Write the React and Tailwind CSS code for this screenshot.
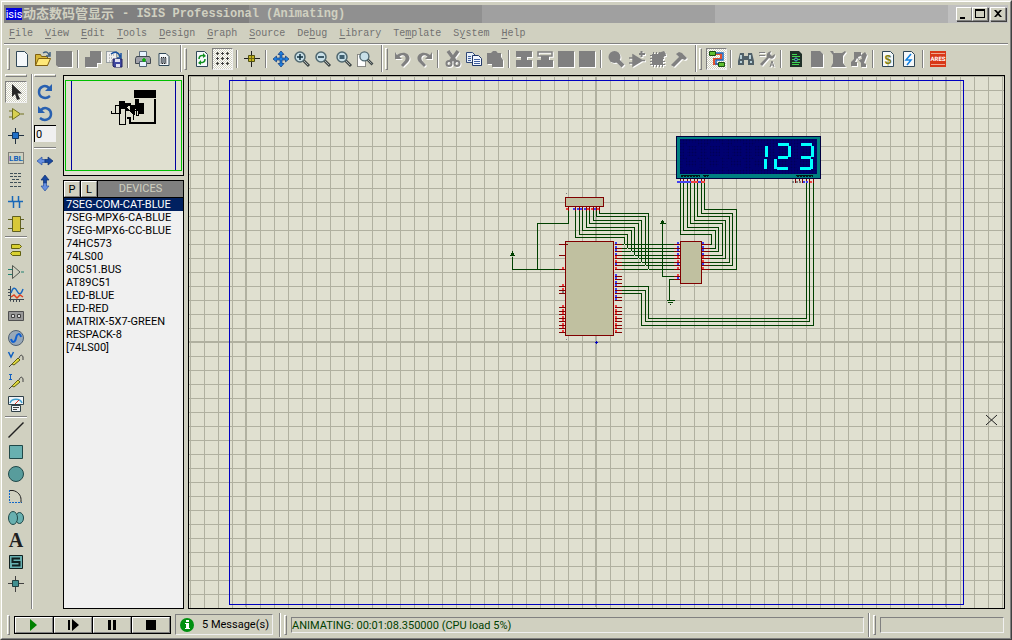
import { useState } from 'react';

const menus = [
  ['', 'F', 'ile'],
  ['', 'V', 'iew'],
  ['', 'E', 'dit'],
  ['', 'T', 'ools'],
  ['', 'D', 'esign'],
  ['', 'G', 'raph'],
  ['', 'S', 'ource'],
  ['De', 'b', 'ug'],
  ['', 'L', 'ibrary'],
  ['Te', 'm', 'plate'],
  ['S', 'y', 'stem'],
  ['', 'H', 'elp'],
];

const devices = [
  '7SEG-COM-CAT-BLUE',
  '7SEG-MPX6-CA-BLUE',
  '7SEG-MPX6-CC-BLUE',
  '74HC573',
  '74LS00',
  '80C51.BUS',
  'AT89C51',
  'LED-BLUE',
  'LED-RED',
  'MATRIX-5X7-GREEN',
  'RESPACK-8',
  '[74LS00]',
];

const page = <path d="M2.5.5h8l3 3v12h-11z" fill="#f4f8fa" stroke="#304858" />;
const lens = (
  <>
    <path d="M9 9l6 6" stroke="#404848" strokeWidth="3" />
    <path d="M10 10l4 4" stroke="#a8b0b0" />
    <circle cx="6" cy="6" r="5" fill="#c8e0e8" stroke="#506870" strokeWidth="1.5" />
  </>
);
const probe = (
  <>
    <path d="M1 15l4-4M11 6c1-3 3-4 4-1v3" stroke="#404040" fill="none" />
    <path d="M4 12l6-6 2 2-6 5z" fill="#e0d840" stroke="#606010" />
  </>
);

// Every icon is drawn on a 16x16 grid
const icons = {
  new: page,
  open: (
    <>
      <path d="M.5 14.5v-11h5l1 2h6v9z" fill="#d8b838" stroke="#806010" />
      <path d="M.5 14.5l3-7h12l-3 7z" fill="#ffe878" stroke="#806010" />
      <path d="M8 2c3-2 5-1 6 2M15 1v4h-4" stroke="#406080" strokeWidth="1.5" fill="none" />
    </>
  ),
  save: <path d="M0 0h16v16H2l-2-2z" fill="#808080" />,
  importSection: <path d="M5 0h11v12h-4v4H0V6h5z" fill="#808080" />,
  exportSection: (
    <>
      <path d="M.5.5h10v11H.5z" fill="#f0f0f0" stroke="#506070" strokeDasharray="1 1" />
      <path d="M3 4h5M3 7h3M3 10h3" stroke="#909090" strokeDasharray="1 1" />
      <path d="M5 3c4-3 8-2 9 3M15 2v5h-4" fill="none" stroke="#1850a0" strokeWidth="1.5" />
      <path d="M7 8h9v8H8l-1-1z" fill="#4048a0" stroke="#202060" />
      <path d="M9 8h5v3H9zM10 13h4v3h-4z" fill="#e0e0f0" />
    </>
  ),
  print: (
    <>
      <path d="M4.5.5h7v6h-7z" fill="#e8f4ff" stroke="#607080" />
      <path d="M1.5 5.5h13l1 2v5H.5v-5z" fill="#a0a0a8" stroke="#404850" />
      <path d="M4.5 10.5h7v5h-7z" fill="#e8f4ff" stroke="#506070" />
      <path d="M9 7v4M7 9h4" stroke="#00b000" strokeWidth="1.5" />
    </>
  ),
  area: (
    <>
      <path d="M3 2.500h7l3 3v9H3z" fill="#f4f8fa" stroke="#304858" />
      <path d="M5 6.500h5v6H5z" fill="#808890" stroke="#202020" strokeDasharray="1 1" />
    </>
  ),
  redraw: (
    <>
      {page}
      <path d="M5 8c0-4 4-4 5-3M11 8c0 4-4 4-5 3" fill="none" stroke="#109020" strokeWidth="1.5" />
      <path d="M9 2l3 3-3 2zM7 9l-3 3 3 2z" fill="#109020" />
    </>
  ),
  grid: (
    <path
      d="M1 2.500h3M6 2.500h3M11 2.500h3M1 7.500h3M6 7.500h3M11 7.500h3M1 12.500h3M6 12.500h3M11 12.500h3M2.500 1v3M7.500 1v3M12.500 1v3M2.500 6v3M7.500 6v3M12.500 6v3M2.500 11v3M7.500 11v3M12.500 11v3"
      stroke="#404040"
    />
  ),
  origin: (
    <>
      <path d="M7.500 0v16M0 7.500h16" stroke="#202020" />
      <path d="M4.500 4.500h6v6h-6z" fill="#c8b820" stroke="#505010" />
      <path d="M7.500 5v5M5 7.500h5" stroke="#706810" />
    </>
  ),
  pan: (
    <path
      d="M8 0l3 3.500H9V7h3.500V5L16 8l-3.500 3V9H9v3.500h2L8 16l-3-3.500h2V9H3.500v2L0 8l3.500-3v2H7V3.500H5z"
      fill="#2080e0"
      stroke="#103878"
      strokeWidth=".7"
    />
  ),
  zoomIn: (
    <>
      {lens}
      <path d="M6 3v6M3 6h6" stroke="#103040" strokeWidth="1.5" />
    </>
  ),
  zoomOut: (
    <>
      {lens}
      <path d="M3 6h6" stroke="#103040" strokeWidth="1.5" />
    </>
  ),
  zoomAll: (
    <>
      {lens}
      <path d="M3.500 4h5v4h-5z" fill="#406070" />
    </>
  ),
  zoomArea: (
    <>
      <path d="M.5 3.500h8v12h-8z" fill="#fff" stroke="#303030" strokeDasharray="1 1" />
      <g transform="translate(2 0) scale(.9)">{lens}</g>
    </>
  ),
  undo: <path d="M0 1v7h7L4.500 5.500C9 2 12 6 10 9.500L6 14l2 2 5-5c5-6-3-13-11-7z" fill="#808080" />,
  redo: <path d="M16 1v7H9l2.500-2.500C7 2 4 6 6 9.500L10 14l-2 2-5-5c-5-6 3-13 11-7z" fill="#808080" />,
  cut: (
    <>
      <path d="M3 0l8 11M13 0L5 11" stroke="#808080" strokeWidth="3.500" />
      <circle cx="4" cy="12.500" r="2.500" fill="none" stroke="#808080" strokeWidth="2" />
      <circle cx="12" cy="12.500" r="2.500" fill="none" stroke="#808080" strokeWidth="2" />
    </>
  ),
  copy: (
    <>
      <path d="M.5 1.500h6l3 3v7h-9z" fill="#e8f0f8" stroke="#304878" />
      <path d="M6.500 4.500h6l3 3v7h-9z" fill="#f4f8ff" stroke="#203868" />
      <path d="M2 5.500h3M2 7.500h3M2 9.500h3M8 8.500h6M8 10.500h6M8 12.500h6" stroke="#4060a0" />
    </>
  ),
  paste: <path d="M0 2h4l2-2h3l2 2h3v4l2 3v7H5v-3H0z" fill="#808080" />,
  blockCopy: <path d="M0 0h16v6h-5v3h5v7H0V9h5V6H0z" fill="#808080" />,
  blockMove: (
    <>
      <path d="M1 1h14v4H1z" fill="none" stroke="#808080" strokeWidth="1.500" />
      <path d="M4 5h8v4h4v7H0V9h4z" fill="#808080" />
    </>
  ),
  block: <path d="M0 0h16v16H0z" fill="#808080" />,
  pick: (
    <>
      <circle cx="6.500" cy="6" r="6" fill="#808080" />
      <path d="M9 9l6 6" stroke="#808080" strokeWidth="4" />
    </>
  ),
  makeDevice: (
    <>
      <path d="M4 4l9 5.500L4 15zM0 7h5M0 12h5M12 9.500h4" fill="#808080" stroke="#808080" strokeWidth="1.500" />
      <path d="M12.500 0v6M10 3h6" stroke="#808080" strokeWidth="2" />
    </>
  ),
  packaging: (
    <>
      <path d="M2 3h11v10H2z" fill="#808080" />
      <path d="M8 2l6-2 2 3-4 6z" fill="#808080" />
      <path d="M3.500 1v15M6.500 1v15M9.500 1v15M12.500 8v8M0 4.500h16M0 7.500h14M0 10.500h15M0 13.500h15" stroke="#808080" />
    </>
  ),
  decompose: <path d="M0 14l8-8-3-3 3-2 3 1 5 5-2 2-3-1-8 8z" fill="#808080" />,
  wires: (
    <>
      <path d="M6 3h6v5H5v5h6" fill="none" stroke="#e05030" strokeWidth="2" />
      <path d="M7 2h7v7H7v4h4" fill="none" stroke="#1868c0" strokeWidth="1.500" />
      <path d="M.5.5h6v4h-6zM9.500 11.500h6v4h-6z" fill="#60c030" stroke="#185010" />
    </>
  ),
  find: (
    <>
      <path d="M2 2h4v3h4V2h4l2 8v4h-6V9H6v5H0v-4z" fill="#506068" />
      <path d="M2 11h2M12 11h2M3 4v4M12 4v4" stroke="#b8d0d8" strokeWidth="2" />
    </>
  ),
  properties: (
    <>
      <path d="M0 1.500h6M0 4.500h6" stroke="#808080" />
      <path d="M1 13l7-7c-1-3 1-5 4-6l-1 3 2 2 3-2c0 4-3 6-6 4l-7 8z" fill="#808080" />
      <path d="M11 16l2-6 2 6M12 14h2" stroke="#808080" fill="none" />
    </>
  ),
  newSheet: (
    <>
      <path d="M2 0h9l3 3v13H2z" fill="#203028" />
      <path d="M4 3.500h5M4 5.500h8M4 11.500h8M4 13.500h7M4 8.500h2M10 8.500h2" stroke="#40d850" />
      <circle cx="8" cy="8.500" r="1.500" fill="none" stroke="#50b8e0" />
    </>
  ),
  removeSheet: <path d="M2 0h9l3 3v13H2z" fill="#808080" />,
  exitSheet: <path d="M0 0h3l1 2h8l3-2 1 1-3 4v7l3 4H1l2-4V4z" fill="#808080" />,
  zoomChild: <path d="M3 1h7v4l-3 1 1 3 3-1-1-4 4-3 2 3-3 8 2 1v3h-5v-4L6 7l-2 4h2v4H0v-4l3-3z" fill="#808080" />,
  bom: (
    <>
      {page}
      <text x="8" y="13" textAnchor="middle" className="font-bold" fontSize="12" fontFamily="Liberation Sans" fill="#808010">
        $
      </text>
    </>
  ),
  erc: (
    <>
      {page}
      <path d="M10 3L5 9h5l-4 5" fill="none" stroke="#1080e0" strokeWidth="1.500" />
    </>
  ),
  ares: (
    <>
      <path d="M0 0h16v16H0z" fill="#d83818" />
      <path d="M1 2.500h14M1 13.500h14" stroke="#f0a890" />
      <text x="8" y="10" textAnchor="middle" textRendering="geometricPrecision" fontSize="6" fontFamily="Roboto" className="font-bold" fill="#fff">
        ARES
      </text>
    </>
  ),
  select: <path d="M4 0v13l3-3 2 6 3-1-2.500-5.500H14z" fill="#282828" />,
  component: (
    <path d="M4.500 2.500l8 5.500-8 5.500zM1 5h3M1 11h3M13 8h3" fill="#d8d050" stroke="#707020" />
  ),
  junction: (
    <>
      <path d="M7.500 0v16M0 7.500h16" stroke="#203040" />
      <path d="M4.500 4.500h6v6h-6z" fill="#2070c8" stroke="#103868" />
    </>
  ),
  label: (
    <>
      <path d="M.5 2.500h15v11H.5z" fill="none" stroke="#303030" strokeDasharray="1 1" />
      <text x="8" y="11" textAnchor="middle" fontSize="8" fontFamily="Roboto" className="font-bold" fill="#1060b8">
        LBL
      </text>
    </>
  ),
  script: (
    <path
      d="M2 1.500h12M2 4.500h12M4 7.500h8M2 10.500h12M2 14.500h12"
      stroke="#405058"
      strokeDasharray="3 1"
    />
  ),
  bus: <path d="M0 7.500h15M4.500 2v6M10.500 2v6M5.500 7v7M11.500 7v7" stroke="#1868b8" strokeWidth="1.500" />,
  subcircuit: (
    <>
      <path d="M0 3.500h16M0 12.500h16" stroke="#606020" />
      <path d="M4.500.5h8v15h-8z" fill="#d8c838" stroke="#606020" />
    </>
  ),
  terminal: (
    <path d="M3.500 2.500h8l2 2-2 2h-8zM12.500 9.500h-8l-2 2 2 2h8z" fill="#d8d030" stroke="#606010" />
  ),
  pin: (
    <>
      <path d="M4.500 1.500L12 8l-7.500 6.500z" fill="none" stroke="#505850" />
      <path d="M0 5.500h4M0 10.500h4M13 8h3" stroke="#208070" />
    </>
  ),
  graph: (
    <>
      <path d="M2.500 0v15.500M1 13.500h15M0 3.500h2M0 6.500h2M0 9.500h2M5.500 14v2M8.500 14v2M11.500 14v2" stroke="#404850" />
      <path d="M3 7c2-6 4-6 6-2s4 4 6-2" fill="none" stroke="#1868c0" strokeWidth="1.500" />
      <path d="M3 11l3-2 3 3 3-3 3 2" fill="none" stroke="#e04020" strokeWidth="1.500" />
    </>
  ),
  tape: (
    <>
      <path d="M.5 3.500h15v9H.5z" fill="#989898" stroke="#505050" />
      <path d="M3.500 6.500h3v3h-3zM9.500 6.500h3v3h-3z" fill="#ddd" stroke="#404040" />
    </>
  ),
  generator: (
    <>
      <circle cx="8" cy="8" r="7.500" fill="#98a8b8" stroke="#506070" />
      <path d="M3 9c1 4 4 4 5-1s4-5 5-1" fill="none" stroke="#1060d0" strokeWidth="2" />
    </>
  ),
  voltage: (
    <>
      {probe}
      <path d="M.5 0L3 5 5.500 0" fill="none" stroke="#1060c0" strokeWidth="1.500" />
    </>
  ),
  current: (
    <>
      {probe}
      <path d="M1 .5h3M2.500.5v5M1 5.500h3" fill="none" stroke="#1060c0" />
    </>
  ),
  instrument: (
    <>
      <path d="M.5.5h15v8H.5zM3.500 9.500h9v6h-9z" fill="#f0f4f8" stroke="#304048" />
      <path d="M2 7c2-5 10-5 12 0" fill="none" stroke="#40a0d0" strokeWidth="1.500" />
      <path d="M7 8l4-4" stroke="#e03020" />
      <path d="M5 11.500h6M5 13.500h4" stroke="#404040" />
    </>
  ),
  line: <path d="M.5 15.500l15-15" stroke="#202020" strokeWidth="1.500" />,
  box: <path d="M1.500 1.500h13v13h-13z" fill="#68b0b0" stroke="#204848" />,
  circle: <circle cx="8" cy="8" r="7.500" fill="#589c9c" stroke="#204848" />,
  arc: (
    <>
      <path d="M1.500 2v12.500H14" fill="none" stroke="#1068c8" strokeDasharray="2 1" />
      <path d="M2 2.500h3c5 1 8 5 8 9v3" fill="none" stroke="#202020" />
    </>
  ),
  path: (
    <>
      <ellipse cx="11.500" cy="8" rx="4" ry="5.500" fill="#68b0b0" stroke="#204848" />
      <ellipse cx="5" cy="8" rx="4.500" ry="6.500" fill="#68b0b0" stroke="#204848" />
    </>
  ),
  text: (
    <text x="8" y="15" textAnchor="middle" fontSize="20" fontFamily="Liberation Serif" className="font-bold" fill="#202020">
      A
    </text>
  ),
  symbol: (
    <>
      <path d="M1.500 1.500h13v13h-13z" fill="#68b0b0" stroke="#102020" />
      <path d="M12 4.500H4.500v3.500h7v3.500H4" fill="none" stroke="#102020" strokeWidth="2" />
    </>
  ),
  marker: (
    <>
      <path d="M7.500 0v16M0 7.500h16" stroke="#404040" />
      <path d="M4.500 4.500h6v6h-6z" fill="#409090" stroke="#204040" />
    </>
  ),
  rotateCw: (
    <>
      <path d="M12 4C8 0 2 3 2 8s6 8 11 4" fill="none" stroke="#2860b0" strokeWidth="2.500" />
      <path d="M15 0v7H8z" fill="#2860b0" />
    </>
  ),
  rotateCcw: (
    <>
      <path d="M4 4c4-4 10-1 10 4s-6 8-11 4" fill="none" stroke="#2860b0" strokeWidth="2.500" />
      <path d="M1 0v7h7z" fill="#2860b0" />
    </>
  ),
  flipH: (
    <>
      <path d="M0 8l5-4v2.500h3v3H5V12z" fill="#6890e0" stroke="#2850a0" strokeWidth=".7" />
      <path d="M16 8l-5-4v2.500H8v3h3V12z" fill="#1848a0" stroke="#103070" strokeWidth=".7" />
    </>
  ),
  flipV: (
    <>
      <path d="M8 0l4 5H9.500v3h-3V5H4z" fill="#1848a0" stroke="#103070" strokeWidth=".7" />
      <path d="M8 16l4-5H9.500V8h-3v3H4z" fill="#6890e0" stroke="#2850a0" strokeWidth=".7" />
    </>
  ),
};

// null is a separator
const toolbars = [
  ['new', 'open', 'save', null, 'importSection', 'exportSection', null, 'print', 'area'],
  ['redraw', 'grid', null, 'origin', null, 'pan', 'zoomIn', 'zoomOut', 'zoomAll', 'zoomArea'],
  ['undo', 'redo', null, 'cut', 'copy', 'paste', null, 'blockCopy', 'blockMove', 'block', 'block', null, 'pick', 'makeDevice', 'packaging', 'decompose'],
  ['wires', null, 'find', 'properties', null, 'newSheet', 'removeSheet', 'exitSheet', 'zoomChild', null, 'bom', 'erc', null, 'ares'],
];

const disabledIcons = [
  'save', 'importSection', 'undo', 'redo', 'cut', 'paste', 'blockCopy', 'blockMove', 'block', 'pick',
  'makeDevice', 'packaging', 'decompose', 'properties', 'removeSheet', 'exitSheet', 'zoomChild',
];

const modes = [
  'select', 'component', 'junction', 'label', 'script', 'bus', 'subcircuit', null,
  'terminal', 'pin', 'graph', 'tape', 'generator', 'voltage', 'current', 'instrument', null,
  'line', 'box', 'circle', 'arc', 'path', 'text', 'symbol', 'marker',
];

const raised = 'border border-t-white border-l-white border-r-[#808080] border-b-[#808080]';
const sunken = 'border border-t-[#808080] border-l-[#808080] border-r-[#f0f0f0] border-b-[#f0f0f0]';
const pressed = 'bg-[repeating-conic-gradient(#fff_0_25%,#d0d0c0_0_50%)] bg-[length:2px_2px]';

function IconButton({ name, active, className }) {
  const disabled = disabledIcons.includes(name);
  return (
    <button
      aria-label={name}
      disabled={disabled}
      className={`flex shrink-0 items-center justify-center ${className} ${active ? `${sunken} ${pressed}` : ''}`}
    >
      <svg viewBox="0 0 16 16" className={`size-4 shrink-0 overflow-visible ${disabled ? 'drop-shadow-[1px_1px_0_#fff]' : ''}`}>
        {icons[name]}
      </svg>
    </button>
  );
}

function Toolbar({ items, first }) {
  return (
    <div className="mr-1.5 flex items-center">
      {!first && <div className="mr-0.5 h-full w-0.5 border-l border-[#808080] bg-white" />}
      <div className={`h-[22px] w-[3px] ${raised} ${first ? 'mr-px ml-[3px]' : 'mr-1'}`} />
      {items.map((name, i) =>
        name ? (
          <IconButton key={i} name={name} active={name === 'grid' || name === 'wires'} className="h-[22px] w-[21px]" />
        ) : (
          <div key={i} className="mx-[3px] h-[18px] w-0.5 border-l border-[#808080] bg-white" />
        )
      )}
    </div>
  );
}

function Rule() {
  return <div className="my-px h-0.5 w-full shrink-0 border-t border-[#808080] bg-white" />;
}

// ---- Schematic ----

const busY = [244, 248, 251, 255, 258, 262, 265, 269];
const portY = [276, 279, 283, 286, 290, 293, 297, 300];
const lowY = [307, 311, 314, 318, 321, 325, 328, 332];
const packX = [575, 579, 582, 586, 589, 593, 596, 599];
const packTurnY = [237, 234, 230, 227, 223, 220, 216, 213];
const packDropX = [624, 627, 631, 634, 638, 641, 645, 648];
const dispX = [680, 683, 687, 690, 694, 697, 701, 704];
const dispTurnY = [234, 230, 227, 223, 220, 216, 213, 209];
const dispDropX = [711, 715, 718, 722, 725, 729, 732, 736];
const busLevels = 'bbbbrrbr';
const levelColors = { r: '#f04040', b: '#4040f0', g: '#808080' };

function Level({ x, y, c }) {
  return <rect x={x - 0.5} y={y - 0.5} width="2" height="2" fill={levelColors[c]} />;
}

const segments = {
  a: 'M6 144h11',
  b: 'M18 145v11',
  c: 'M17 158v10',
  d: 'M5 168h11',
  e: 'M4 158v10',
  f: 'M5 145v11',
  g: 'M6 157h10',
};
const digitSegments = { 1: 'bc', 2: 'abged', 3: 'abgcd' };

function Digit({ x, value }) {
  const lit = digitSegments[value] || '';
  return (
    <g transform={`translate(${x} 0)`} fill="none" strokeWidth="3">
      {Object.keys(segments).map((s) =>
        lit.includes(s) ? null : <path key={s} d={segments[s]} stroke="#000070" />
      )}
      {lit.split('').map((s) => (
        <path key={s} d={segments[s]} stroke="#00ffff" />
      ))}
    </g>
  );
}

function Schematic() {
  return (
    <svg className="block h-full w-full" shapeRendering="crispEdges" role="img" aria-label="schematic">
      <defs>
        <pattern id="grid" x="1" y="0" width="14" height="14" patternUnits="userSpaceOnUse">
          <path d="M0 0h14v1H1v13H0z" fill="#b0b0a0" />
        </pattern>
        <pattern id="matrix" width="3" height="3" patternUnits="userSpaceOnUse">
          <path d="M0 0h3v1H1v2H0z" fill="#000078" />
        </pattern>
      </defs>
      <rect width="100%" height="100%" fill="url(#grid)" />
      <path d="M56 0h2v531h-2zM406 0h2v531h-2zM756 0h2v531h-2zM0 265h815v2H0z" fill="#b0b0a0" />

      {/* drawing origin is the window corner, lines sit on pixel centres */}
      <g transform="translate(-188.5 -75.5)" fill="none" stroke="#004000">
        <path d="M229 80H963V604H229z" stroke="#0000c0" />

        {/* wires */}
        {busY.map((y, i) => (
          <g key={y}>
            <path d={`M${packX[i]} 209V${packTurnY[i]}H${packDropX[i]}V${y}`} />
            <path d={`M620 ${y}H674`} />
            <path d={`M708 ${y}H${dispDropX[i]}V${dispTurnY[i]}H${dispX[i]}V182`} />
            <rect x={packDropX[i] - 0.5} y={y - 0.5} width="1" height="1" fill="#d0e0c0" stroke="none" />
          </g>
        ))}
        <path d="M568 209V223H537V269M512 256V269H559" />
        <path d="M620 286H648V318H806V182M620 290H645V321H809V182M620 293H641V325H813V182" />
        <path d="M662 223V276H674M674 279H669V300M666 300H674M667 302H672M669 304H670" />
        <path
          d="M511.500 250.500h1v2h1v2h1v1h-5v-1h1v-2h1zM661.500 219.500h1v1h1v2h2v1h-6v-1h1v-2h1z"
          fill="#004000"
          stroke="none"
        />

        {/* pins */}
        <g stroke="#800000">
          {[244, 255, 269, 286, 290, 293, ...lowY].map((y) => (
            <path key={y} d={`M558 ${y}H565`} />
          ))}
          {[...busY, ...portY, ...lowY].map((y) => (
            <path key={y} d={`M614 ${y}H621`} />
          ))}
          {[...busY, 276, 279].map((y) => (
            <path key={y} d={`M673 ${y}H680`} />
          ))}
          {busY.map((y) => (
            <path key={y} d={`M701 ${y}H709`} />
          ))}
          {[568, ...packX].map((x) => (
            <path key={x} d={`M${x} 206V210`} />
          ))}
          {[...dispX, 795, 799, 802, 806, 809, 813].map((x) => (
            <path key={x} d={`M${x} 178V182`} />
          ))}
        </g>

        {/* chips */}
        <g fill="#c0c0a0" stroke="#800000">
          <path d="M565 197H603V206H565z" />
          <path d="M565 241H613V335H565z" />
          <path d="M680 241H701V283H680z" />
        </g>
        <path d="M565 244h2" stroke="#800000" />

        {/* logic levels */}
        <g stroke="none">
          {busY.map((y, i) => (
            <g key={y}>
              <Level x={615} y={y - 2} c={busLevels[i]} />
              <Level x={677} y={y - 2} c={busLevels[i]} />
              <Level x={702} y={y - 2} c={busLevels[i]} />
              <Level x={packX[i] - 2} y={208} c={busLevels[i]} />
              <Level x={dispX[i] - 3} y={181} c={busLevels[i]} />
              <Level x={dispX[i] - 1} y={181} c={busLevels[i]} />
            </g>
          ))}
          {portY.map((y) => (
            <Level key={y} x={615} y={y - 2} c="b" />
          ))}
          {lowY.map((y) => (
            <g key={y}>
              <Level x={562} y={y - 2} c="r" />
              <Level x={615} y={y - 2} c="r" />
            </g>
          ))}
          <Level x={566} y={208} c="r" />
          <Level x={562} y={267} c="r" />
          <Level x={562} y={284} c="r" />
          <Level x={562} y={288} c="r" />
          <Level x={562} y={291} c="g" />
          <Level x={677} y={274} c="r" />
          <Level x={677} y={277} c="b" />
          {[792, 796, 799].map((x) => (
            <Level key={x} x={x} y={181} c="g" />
          ))}
          {[803, 806].map((x) => (
            <Level key={x} x={x} y={181} c="b" />
          ))}
          <Level x={810} y={181} c="r" />
        </g>

        {/* seven segment display */}
        <rect x="676" y="136" width="144" height="42" fill="#008080" stroke="#000040" />
        <rect x="679.5" y="138.5" width="137" height="35" fill="#000058" stroke="none" />
        <rect x="679.5" y="138.5" width="137" height="35" fill="url(#matrix)" stroke="none" />
        <path d="M703 139v34M725 139v34M748 139v34M771 139v34M793 139v34" stroke="#000070" />
        {[680, 703, 725, 748, 771, 794].map((x, i) => (
          <Digit key={x} x={x} value={[0, 0, 0, 1, 2, 3][i] || null} />
        ))}
        <path d="M680 175h19M702 175h6M795 175h17" stroke="#001818" />
        <path d="M680 176h19M703 176h4M796 176h16" stroke="#001818" strokeDasharray="2 1" />

        <path d="M565 193h1M565 339h1M679 287h1" stroke="#808080" />
        <path d="M594.500 341.500h1v-1h1v1h1v1h-1v1h-1v-1h-1z" fill="#0000c0" stroke="none" />
      </g>
      <path d="M797 339l11 10M808 339l-11 10" stroke="#202020" shapeRendering="auto" />
    </svg>
  );
}

function Overview() {
  return (
    <svg viewBox="64 76 119 99" className="block h-[99px] w-full" shapeRendering="crispEdges" role="img" aria-label="overview">
      <g transform="translate(.5 .5)" fill="none">
        <path d="M71 80V170M175 80V170" stroke="#0000a0" />
        <path d="M65 80H181V170H65z" stroke="#00c000" />
        <path d="M134 90H155V97H134z" fill="#000" stroke="#000" />
        <path d="M154 98V122H129V117H126" stroke="#000" strokeWidth="2" />
        <path d="M119 108H125V124H119zM115 105H120V113H115zM111 110V113H115M136 109H138V115H136z" stroke="#000" />
        <path d="M119 101H124V103H130V110H126V107H119zM135 99H138V103H143V113H139V108H135zM125 107L134 114V105H130M133 104V119M131 110h6" fill="#000" stroke="#000" />
      </g>
    </svg>
  );
}

const transport = [
  ['Play', <path d="M1 0l7 6-7 6z" fill="#008000" />],
  ['Step', <path d="M0 1h2v10H0zM4 0l7 6-7 6z" />],
  ['Pause', <path d="M1 1h3v10H1zM6 1h3v10H6z" />],
  ['Stop', <path d="M0 1h10v10H0z" />],
];

function Divider() {
  return (
    <>
      <div className="h-6 w-0.5 border-l border-[#808080] bg-white" />
      <div className={`mr-1 ml-[3px] h-5 w-[3px] ${raised}`} />
    </>
  );
}

export default function App() {
  const [selected, setSelected] = useState(0);
  const [angle, setAngle] = useState('0');

  return (
    <div className="h-screen overflow-hidden border border-t-[#e8e8e0] border-l-[#e0e0d0] border-r-[#404040] border-b-[#404040] bg-[#d0d0c0] font-[Roboto,sans-serif] text-[11px] leading-[13px] text-black">
      <div className={`flex h-full flex-col px-0.5 pt-[3px] ${raised}`}>
        {/* Title bar */}
        <header className="flex h-[18px] shrink-0 items-center bg-[linear-gradient(90deg,#808080_24.4%,#909090_24.4%_47.6%,#a0a0a0_47.6%_70.8%,#b0b0b0_70.8%_94%,#c0c0c0_94%)] px-0.5">
          <span className="flex h-3 w-4 items-center justify-center bg-[#0000e0] text-[11px] text-white">isis</span>
          <h1 className="ml-px flex items-center gap-2 font-['Liberation_Mono','Noto_Sans_CJK_SC',monospace] text-[12px] font-bold whitespace-nowrap text-[#d0d0c0]">
            <span className="text-[13px]">动态数码管显示</span>
            <span>- ISIS Professional (Animating)</span>
          </h1>
          <div className="ml-auto flex">
            {['M3 9h5v2H3z', 'M2 1h10v9H2zM3 3v6h8V3z', 'M3 2h2l2 2 2-2h2L8 5.500 11 9H9L7 7 5 9H3l3-3.500z'].map((d, i) => (
              <button
                key={d}
                aria-label={['Minimize', 'Maximize', 'Close'][i]}
                className={`flex h-3.5 w-4 items-center justify-center bg-[#d0d0c0] shadow-[1px_1px_0_#404040] ${raised} ${i === 2 ? 'ml-0.5' : ''}`}
              >
                <svg viewBox="0 0 14 12" className="h-3 w-3.5 shrink-0" fillRule="evenodd">
                  <path d={d} />
                </svg>
              </button>
            ))}
          </div>
        </header>

        {/* Menu */}
        <nav className="flex h-5 shrink-0 items-center gap-3 pl-[5px] font-['Liberation_Mono',monospace] text-[10px] text-[#707070]">
          {menus.map(([before, key, after]) => (
            <button key={before + key + after}>
              {before}
              <span className="underline underline-offset-2">{key}</span>
              {after}
            </button>
          ))}
        </nav>
        <div className="h-0.5 shrink-0 border-t border-[#808080] bg-white" />

        <div className="flex h-[27px] shrink-0">
          {toolbars.map((items, i) => (
            <Toolbar key={i} items={items} first={i === 0} />
          ))}
        </div>

        <main className="flex min-h-0 flex-1 pt-[3px] pb-0.5">
          {/* Mode buttons */}
          <div className="-mt-px flex w-7 flex-col items-center border-r border-[#808080] pr-1 pl-px">
            <div className={`mb-1 h-[3px] w-full shrink-0 ${raised}`} />
            {modes.map((name, i) =>
              name ? (
                <IconButton key={i} name={name} active={name === 'select'} className="h-[22px] w-[22px]" />
              ) : (
                <Rule key={i} />
              )
            )}
          </div>
          <div className="-mt-px flex w-[30px] flex-col items-center border-l border-white pr-1.5 pl-px">
            <div className={`mb-1 h-[3px] w-full shrink-0 ${raised}`} />
            <IconButton name="rotateCw" className="h-[22px] w-[22px]" />
            <IconButton name="rotateCcw" className="h-[22px] w-[22px]" />
            <input
              aria-label="Rotation angle"
              value={angle}
              onChange={(e) => setAngle(e.target.value)}
              className="mb-1 h-[17px] w-full border-t border-l border-black bg-[#f0f0f0] pl-px"
            />
            <Rule />
            <IconButton name="flipH" className="h-[22px] w-[22px]" />
            <IconButton name="flipV" className="h-[22px] w-[22px]" />
          </div>

          {/* Overview and device list */}
          <aside className="ml-px flex w-[121px] flex-col gap-1">
            <div className="border border-black bg-[#e0e0d0]">
              <Overview />
            </div>
            <section className="flex-1 border border-black bg-[#f0f0f0]">
              <div className="flex h-[17px] gap-px border-b border-black bg-black">
                <button className={`w-4 bg-[#d0d0c0] ${raised}`}>P</button>
                <button className={`w-4 bg-[#d0d0c0] ${raised}`}>L</button>
                <h2 className="flex-1 bg-[#808080] text-center leading-4 text-[#d0d0c0]">DEVICES</h2>
              </div>
              <ul role="listbox" aria-label="Devices">
                {devices.map((name, i) => (
                  <li
                    key={name}
                    role="option"
                    aria-selected={i === selected}
                    onClick={() => setSelected(i)}
                    className={`pl-0.5 whitespace-nowrap ${i === selected ? 'bg-[#002060] text-white' : ''}`}
                  >
                    {name}
                  </li>
                ))}
              </ul>
            </section>
          </aside>

          <div className="mr-[3px] ml-1 min-w-0 flex-1 border border-black bg-[#e0e0d0]">
            <Schematic />
          </div>
        </main>

        {/* Status bar */}
        <footer className="flex h-[27px] shrink-0 items-center">
          <div className={`mr-1 ml-[3px] h-5 w-[3px] ${raised}`} />
          <div className="flex gap-px border border-black bg-black">
            {transport.map(([label, shape]) => (
              <button
                key={label}
                aria-label={label}
                className="flex h-4 w-[38px] items-center justify-center border border-t-white border-l-white border-r-[#808080] border-b-[#808080] bg-[#d0d0c0]"
              >
                <svg viewBox="0 0 11 12" className="h-3 w-[11px]">
                  {shape}
                </svg>
              </button>
            ))}
          </div>
          <div className={`mr-1.5 ml-1 flex h-[21px] w-[98px] items-center gap-2 pl-1 whitespace-nowrap ${sunken}`}>
            <svg viewBox="0 0 14 14" className="size-3.5 shrink-0">
              <circle cx="7" cy="7" r="7" fill="#009010" />
              <path d="M6 2h3v2H6zM5 5h4v5h1v1H5v-1h1V6H5z" fill="#fff" />
            </svg>
            5 Message(s)
          </div>
          <Divider />
          <div className={`mr-1 h-4 flex-1 leading-[15px] whitespace-nowrap text-[#004000] ${sunken}`}>
            ANIMATING: 00:01:08.350000 (CPU load 5%)
          </div>
          <Divider />
          <div className={`mr-1 h-4 w-[124px] ${sunken}`} />
        </footer>
      </div>
    </div>
  );
}
